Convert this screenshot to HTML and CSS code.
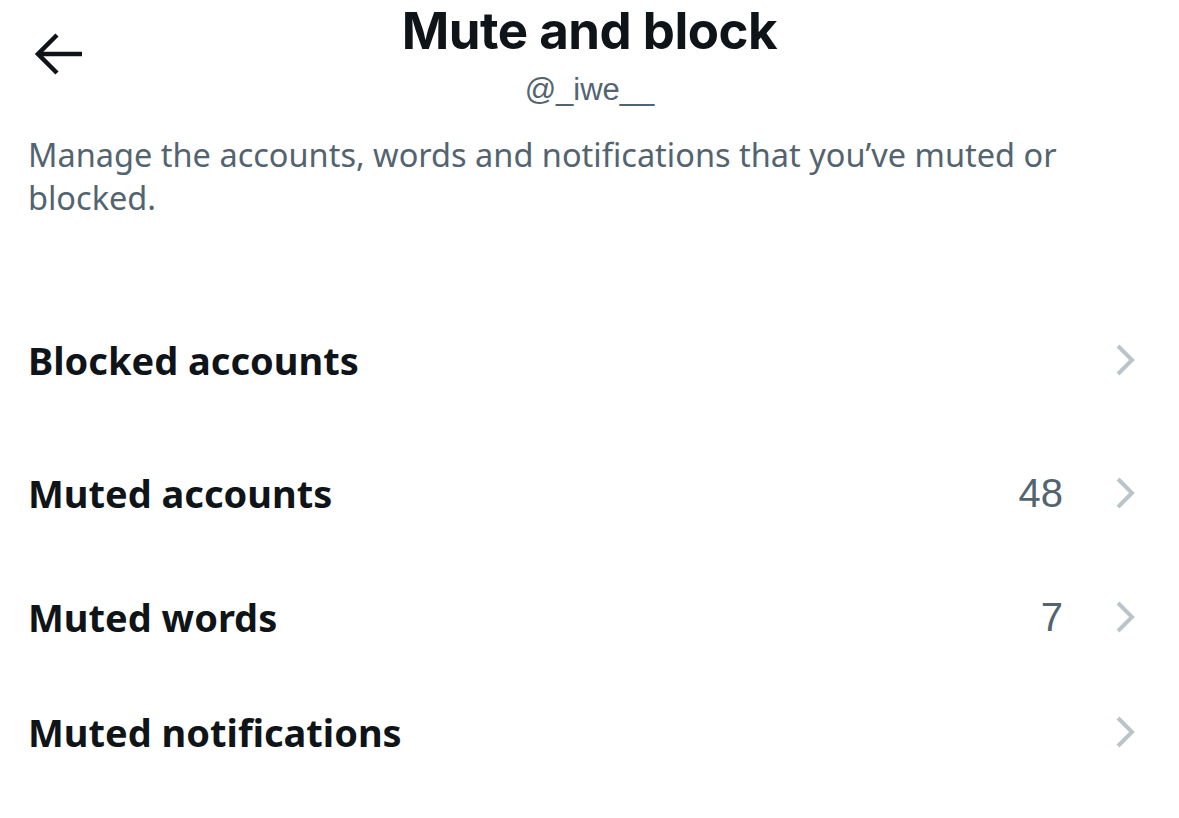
FILE: index.html
```html
<!DOCTYPE html>
<html lang="en">
<head>
<meta charset="utf-8">
<title>Mute and block</title>
<link rel="stylesheet" href="styles.css">
</head>
<body>
<div class="page">
  <header class="header">
    <button class="back" aria-label="Back">
      <svg viewBox="0 0 50 44" width="50" height="44"><path d="M48 22H5M23 3L4 22l19 19" fill="none" stroke="#0f1419" stroke-width="4.5" stroke-linecap="butt" stroke-linejoin="miter"/></svg>
    </button>
    <div class="titles">
      <h1 class="title">Mute and block</h1>
      <div class="handle">@_iwe__</div>
    </div>
    <div class="spacer"></div>
  </header>
  <p class="desc">Manage the accounts, words and notifications that you’ve muted or blocked.</p>
  <ul class="list">
    <li class="row row-1"><span class="label">Blocked accounts</span><span class="count"></span><svg class="chev" viewBox="0 0 22 32" width="22" height="32"><path d="M3 2l14 14L3 30" fill="none" stroke="#b9c4cb" stroke-width="4"/></svg></li>
    <li class="row row-2"><span class="label">Muted accounts</span><span class="count">48</span><svg class="chev" viewBox="0 0 22 32" width="22" height="32"><path d="M3 2l14 14L3 30" fill="none" stroke="#b9c4cb" stroke-width="4"/></svg></li>
    <li class="row row-3"><span class="label">Muted words</span><span class="count">7</span><svg class="chev" viewBox="0 0 22 32" width="22" height="32"><path d="M3 2l14 14L3 30" fill="none" stroke="#b9c4cb" stroke-width="4"/></svg></li>
    <li class="row row-4"><span class="label">Muted notifications</span><span class="count"></span><svg class="chev" viewBox="0 0 22 32" width="22" height="32"><path d="M3 2l14 14L3 30" fill="none" stroke="#b9c4cb" stroke-width="4"/></svg></li>
  </ul>
</div>
</body>
</html>
```
FILE: styles.css
```css
* { box-sizing: border-box; }
html, body { margin: 0; padding: 0; background: #ffffff; }
body { width: 1179px; height: 818px; overflow: hidden; color: #0f1419; }
.page { width: 1179px; }
.header {
  display: grid;
  grid-template-columns: 1fr auto 1fr;
  align-items: start;
  padding-top: 0;
}
.back {
  background: none;
  border: 0;
  padding: 0;
  margin: 32px 0 0 34px;
  width: 50px;
  height: 44px;
  justify-self: start;
}
.back svg { display: block; }
.titles { text-align: center; }
.title {
  margin: 0;
  font-family: Inter, "Liberation Sans", sans-serif;
  font-weight: 700;
  font-size: 51px;
  line-height: 62px;
  letter-spacing: -0.5px;
  color: #0f1419;
}
.handle {
  font-family: "Liberation Sans", Arial, sans-serif;
  font-size: 31px;
  line-height: 40px;
  color: #536471;
  margin-top: 8px;
}
.desc {
  margin: 23px 0 0 0;
  padding: 0 28px;
  font-family: "Noto Sans", sans-serif;
  font-size: 32.5px;
  line-height: 43px;
  color: #536471;
}
.list { list-style: none; margin: 0; padding: 0; }
.row {
  display: flex;
  align-items: center;
  padding: 0 42px 0 28px;
  height: 124px;
}
.row-1 { margin-top: 76px; height: 130px; }
.row-2 { height: 136px; }
.row-3 { height: 112px; }
.row-4 { height: 118px; }
.label {
  font-family: "Noto Sans", sans-serif;
  font-weight: 700;
  font-size: 38px;
  color: #0f1419;
  flex: 1;
}
.count {
  font-family: "Liberation Sans", Arial, sans-serif;
  font-size: 40px;
  color: #536471;
  margin-right: 52px;
}
.chev { display: block; flex: none; }
```
